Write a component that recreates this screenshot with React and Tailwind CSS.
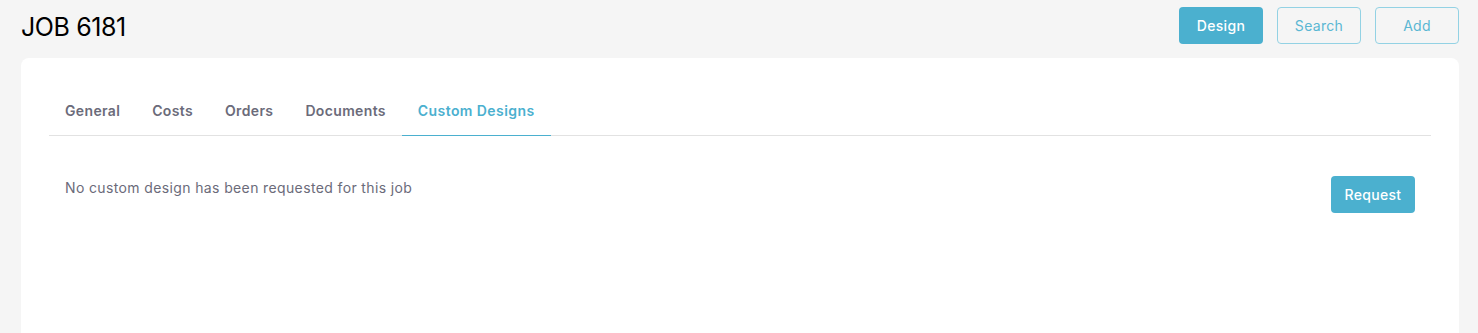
import React, { useState } from 'react';

const tabs = ['General', 'Costs', 'Orders', 'Documents', 'Custom Designs'];

const App = () => {
  const [active, setActive] = useState('Custom Designs');

  return (
    <div className="min-h-screen overflow-hidden bg-[#f5f5f5] pl-[21px] pr-[19px] pt-[7px] font-['Inter',sans-serif] text-[#333]">
      {/* Header */}
      <div className="flex items-start justify-between">
        <h1 className="pt-[4px] text-[25px] leading-[32px] font-normal tracking-[-0.4px] text-black">JOB 6181</h1>
        <div className="flex gap-[14px]">
          <button className="h-[37px] w-[84px] rounded-[4px] bg-[#4bb0cf] text-[14px] font-medium tracking-[0.3px] text-white">
            Design
          </button>
          <button className="h-[37px] w-[84px] rounded-[4px] border border-[#93d2e4] text-[14px] tracking-[0.3px] text-[#5ab7d3]">
            Search
          </button>
          <button className="h-[37px] w-[84px] rounded-[4px] border border-[#93d2e4] text-[14px] tracking-[0.3px] text-[#5ab7d3]">
            Add
          </button>
        </div>
      </div>

      {/* Card */}
      <div className="mt-[14px] min-h-[290px] rounded-[8px] bg-white px-7 pt-7">
        <div className="flex border-b border-[#e2e2e2]">
          {tabs.map(tab => (
            <button
              key={tab}
              onClick={() => setActive(tab)}
              className={
                tab === active
                  ? '-mb-px border-b border-[#4bb0cf] px-4 py-[14px] text-[14px] leading-[21px] font-semibold tracking-[0.42px] text-[#4bb0cf]'
                  : 'px-4 py-[14px] text-[14px] leading-[21px] font-semibold tracking-[0.35px] text-[#6b6b7a]'
              }
            >
              {tab}
            </button>
          ))}
        </div>

        <div className="flex items-start justify-between px-4 pt-10">
          <p className="pt-px text-[14px] leading-[21px] tracking-[0.37px] text-[#6b6b7a]">
            No custom design has been requested for this job
          </p>
          <button className="h-[37px] w-[84px] rounded-[4px] bg-[#4bb0cf] text-[14px] font-medium tracking-[0.3px] text-white">
            Request
          </button>
        </div>
      </div>
    </div>
  );
};

export default App;
